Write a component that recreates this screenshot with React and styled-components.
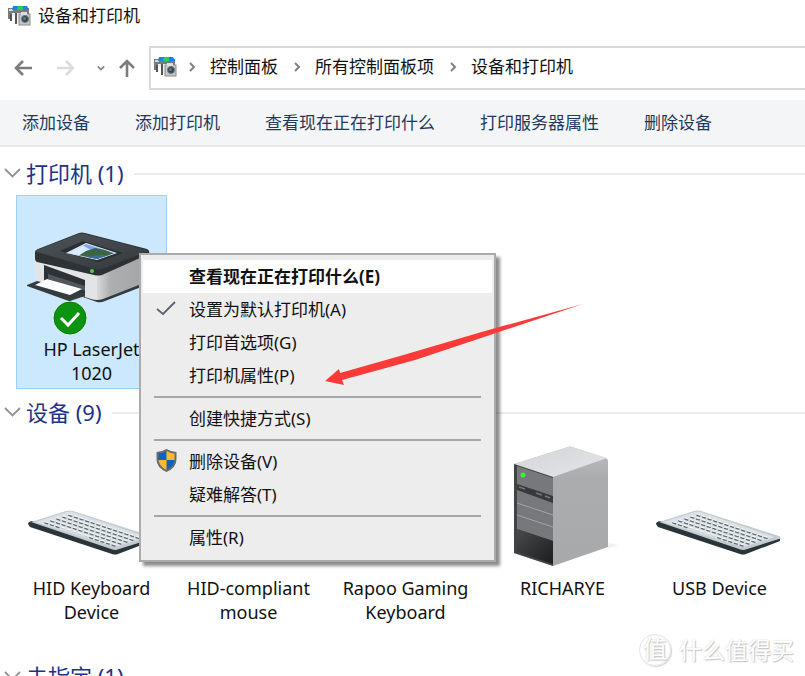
import React from "react";
import styled, { createGlobalStyle, css } from "styled-components";

const Global = createGlobalStyle`
  * { box-sizing: border-box; }
  body { margin: 0; background: #fff; }
  button { font: inherit; color: inherit; background: none; border: 0; padding: 0; cursor: default; white-space: nowrap; }
`;

const Window = styled.div`
  position: relative;
  height: 100vh;
  overflow: hidden;
  background: #fff;
  color: #111;
  font-family: "Noto Sans", "Noto Sans CJK SC", sans-serif;
  font-size: 17px;
  line-height: 24px;
`;
const TitleBar = styled.header`
  display: flex;
  align-items: center;
  gap: 7px;
  height: 34px;
  padding: 0 7px 2px;
`;
const Title = styled.h1`
  margin: 0;
  font-size: 17px;
  font-weight: 400;
`;
const NavRow = styled.nav`
  display: flex;
  align-items: center;
  margin-top: 12px;
  padding-left: 11px;
`;
const NavButton = styled.button`
  display: flex;
  flex-shrink: 0;
  justify-content: center;
  width: ${(p) => p.$width}px;
  color: ${(p) => (p.$faded ? "#dcdcdc" : "#7c7c7c")};
`;
const AddressBar = styled.div`
  flex: 1;
  display: flex;
  align-items: center;
  gap: 10px;
  height: 44px;
  padding: 0 2px 2px;
  border: 1px solid #d9d9d9;
  border-width: 2px 0 2px 2px;
`;
const Crumb = styled.button`
  padding: 0 4px 0 3px;
`;
const Toolbar = styled.div`
  display: flex;
  align-items: center;
  gap: 45px;
  height: 47px;
  margin-top: 10px;
  padding: 0 22px;
  background: #f4f5f7;
  border-bottom: 2px solid #e6e7ea;
  color: #1e395b;
`;
const GroupHeader = styled.h2`
  display: flex;
  align-items: center;
  gap: 5px;
  height: 32px;
  margin: 0;
  padding: 0 0 2px 4px;
  color: #1e3287;
  font-size: 22px;
  font-weight: 400;
  line-height: 30px;
  &::after {
    content: "";
    flex: 1;
    height: 2px;
    margin: 2px 0 0 5px;
    background: #ebebeb;
  }
`;
const Group = styled.section`
  padding-top: ${(p) => p.$top || 0}px;
`;
const TileGrid = styled.div`
  display: grid;
  grid-template-columns: repeat(auto-fill, 151px);
  gap: 6px;
  padding: 5px 0 ${(p) => p.$bottom}px 16px;
`;
const TileBox = styled.div`
  position: relative;
  display: flex;
  flex-direction: column;
  align-items: center;
  gap: 1px;
  height: 194px;
  padding: 12px 8px 0;
  border: 1px solid ${(p) => (p.$selected ? "#99d1ff" : "transparent")};
  background: ${(p) => (p.$selected ? "#cce8ff" : "transparent")};
  font-size: 18px;
  text-align: center;
`;
const Menu = styled.div`
  position: absolute;
  z-index: 2;
  left: 122px;
  top: 57px;
  width: 357px;
  padding: 5px 2px 6px;
  border: 2px solid #ababab;
  background: #ededed;
  box-shadow: 4px 4px 3px rgba(0, 0, 0, 0.45);
  font-size: 17px;
  text-align: left;
`;
const MenuItem = styled.button`
  display: flex;
  align-items: center;
  width: 100%;
  height: 33px;
  padding-top: 1px;
  ${(p) =>
    p.$active &&
    css`
      background: #fff;
      font-weight: 700;
    `}
`;
const MenuIcon = styled.span`
  display: flex;
  justify-content: center;
  width: 46px;
  padding-bottom: 3px;
`;
const Separator = styled.hr`
  height: 2px;
  margin: 4px 11px;
  border: 0;
  background: #a6a6a6;
`;
const Arrow = styled.svg`
  position: absolute;
  z-index: 3;
  left: 325px;
  top: 304px;
  pointer-events: none;
`;
const Watermark = styled.div`
  position: absolute;
  right: 11px;
  bottom: 9px;
  display: flex;
  align-items: center;
  gap: 8px;
  color: #fff;
  font-size: 23px;
  line-height: 34px;
  text-shadow: 1px 1px 1px #c4c4c4, 0 0 2px #ccc;
`;
const Seal = styled.span`
  width: 32px;
  height: 32px;
  border: 1px solid #e6e6e6;
  border-radius: 50%;
  box-shadow: 1px 1px 1px #d4d4d4;
  font-size: 24px;
  line-height: 28px;
  text-align: center;
`;

function DevicesIcon() {
  return (
    <svg width="24" height="22" viewBox="0 0 24 22" aria-hidden="true">
      <path d="M1 3h21v9H18V8H5v6H1z" fill="#777b7e" />
      <path d="M2 4h4v2H2z" fill="#d8dadb" />
      <path d="M6 1h14l2 4H5z" fill="#1685e8" />
      <path d="M11 1h5v4h-6z" fill="#23cf58" />
      <path d="M5 8h8v10H9V11H5z" fill="#eceeef" />
      <path d="M4 9v7M9 8v11" stroke="#555" strokeWidth="2" />
      <rect x="12" y="9" width="11" height="11" fill="#c4c6c8" stroke="#8c8e90" />
      <rect x="14" y="7" width="6" height="3" fill="#dcdedf" />
      <circle cx="18" cy="14" r="3.500" fill="#34474d" stroke="#777" />
      <circle cx="17.500" cy="13.500" r="1.500" fill="#4c8592" />
    </svg>
  );
}

function Chevron({ dir = "right" }) {
  const d = dir === "right" ? "M3 1l4 4-4 4" : "M1 3l4 4 4-4";
  return (
    <svg width="10" height="10" viewBox="0 0 10 10" fill="none" stroke="#808080" strokeWidth="2" aria-hidden="true">
      <path d={d} />
    </svg>
  );
}

function GroupChevron() {
  return (
    <svg width="17" height="12" viewBox="0 0 17 12" fill="none" stroke="#929292" strokeWidth="1.800" aria-hidden="true">
      <path d="M1 2l7.500 7.500L16 2" />
    </svg>
  );
}

function ArrowIcon({ d }) {
  return (
    <svg width="20" height="20" viewBox="0 0 20 20" fill="none" stroke="currentColor" strokeWidth="2.600" aria-hidden="true">
      <path d={d} />
    </svg>
  );
}

function PrinterArt() {
  return (
    <svg width="128" height="128" viewBox="0 0 128 128" overflow="visible" aria-hidden="true">
      <defs>
        <linearGradient id="lid" x1="0" y1="0" x2="1" y2="1">
          <stop offset="0" stopColor="#4d5356" />
          <stop offset="1" stopColor="#33393c" />
        </linearGradient>
        <linearGradient id="side" x1="0" x2="1">
          <stop offset="0" stopColor="#d9dadb" />
          <stop offset="0.250" stopColor="#aeafb0" />
          <stop offset="1" stopColor="#a2a3a4" />
        </linearGradient>
        <clipPath id="screen">
          <path d="M40 45l18-9 29 9-18 6z" />
        </clipPath>
      </defs>
      <path d="M7 72l62 22q4 1 8-1l44-17v-4L71 88z" fill="#333b3f" />
      <path d="M7 47l62 18v27q-3 0-6-1L10 74q-3-1-3-4z" fill="#e3e4e5" />
      <path d="M69 65l52-18v26L75 91q-3 1-6 1z" fill="url(#side)" />
      <path d="M16 57l41 15v17L16 73z" fill="#2c3235" />
      <path d="M20 66l37 12v5L20 71z" fill="#51585b" />
      <path d="M-1 77l10-4 48 12v3l-15 5q-2 0-4-1L-1 78z" fill="#353c3f" />
      <path d="M7 77l12-6 35 10-12 6z" fill="#fbfcfd" />
      <path d="M7 44q0-2 3-3l41-16q3-1 6 0l62 16q3 1 2 5L74 67q-4 1-8 0L9 54q-2-1-2-3z" fill="#2c3235" />
      <path d="M9 42l42-16q3-1 6 0l62 16q2 1-1 2L74 61q-4 1-7 0L9 44q-2-1 0-2z" fill="url(#lid)" />
      <path d="M32 43l23-10 40 12-25 9z" fill="#2a3032" />
      <path d="M38 45l20-10 31 10-20 7z" fill="#f4f7f8" />
      <g clipPath="url(#screen)">
        <path d="M38 34h52v20H38z" fill="#79a9f4" />
        <path d="M42 40l12-3 14 8-8 5-20-5z" fill="#d8ecff" />
        <path d="M50 48l8-5 9-3 10 2 12 5-18 6z" fill="#3c6546" />
        <path d="M58 49l14-2 12 0-15 6z" fill="#3c6b9c" />
      </g>
      <circle cx="64" cy="63" r="2" fill="#49d43d" />
      <circle cx="42" cy="110" r="17" fill="#e5f3e8" />
      <circle cx="42" cy="110" r="16" fill="#0c9310" stroke="#087b0b" />
      <path d="M33 110l7 7 11-12" fill="none" stroke="#fff" strokeWidth="3" />
    </svg>
  );
}

const KEY_ROWS = [0, 1, 2, 3, 4];
const KEY_COLS = Array.from({ length: 13 }, (_, i) => i);

function KeyboardArt() {
  return (
    <svg width="128" height="128" viewBox="0 0 128 128" overflow="visible" aria-hidden="true">
      <path d="M0 77q0-2 4-3l83 27 37-10v3l-34 13q-3 1-6 0L2 80z" fill="#2b3439" />
      <path d="M3 75l35-11q4-1 7 0l78 25q3 2 0 3L88 103q-3 0-5-1z" fill="#c3cbd1" />
      <path d="M7 75l32-10q3-1 6 0l74 25-32 10z" fill="#dbe1e5" />
      <g strokeLinecap="round">
        {KEY_ROWS.map((r) =>
          KEY_COLS.map((c) => {
            const space = r === 4 && c > 2 && c < 8;
            const x = 41 - r * 6 + c * 5.6;
            const y = 67 + r * 1.9 + c * 1.85;
            return (
              <g key={`${r}-${c}`}>
                <path d={`M${x} ${y + 1.2}l2.600 .9`} stroke={space ? "#c8d0d5" : "#5d6970"} strokeWidth="1.600" />
                <path d={`M${x} ${y}l2.600 .9`} stroke="#f5f7f8" strokeWidth="1.200" />
              </g>
            );
          })
        )}
      </g>
    </svg>
  );
}

function MouseArt() {
  return (
    <svg width="128" height="128" viewBox="0 0 128 128" aria-hidden="true">
      <ellipse cx="64" cy="80" rx="24" ry="32" fill="#3b4246" />
      <path d="M64 50v20" stroke="#aab0b3" strokeWidth="4" />
    </svg>
  );
}

function TowerArt() {
  return (
    <svg width="128" height="128" viewBox="0 0 128 128" overflow="visible" aria-hidden="true">
      <defs>
        <linearGradient id="towerTop" x1="0" y1="0" x2="1" y2="1">
          <stop offset="0" stopColor="#d2d4d7" />
          <stop offset="0.700" stopColor="#dfe0e3" />
          <stop offset="1" stopColor="#c6c7ca" />
        </linearGradient>
        <linearGradient id="towerSide" x1="0" y1="0" x2="0" y2="1">
          <stop offset="0" stopColor="#bfc0c2" />
          <stop offset="0.250" stopColor="#abacae" />
          <stop offset="1" stopColor="#a8a9ab" />
        </linearGradient>
        <linearGradient id="towerBase" x1="0" y1="0" x2="1" y2="1">
          <stop offset="0" stopColor="#494a4c" />
          <stop offset="1" stopColor="#1c1d1e" />
        </linearGradient>
      </defs>
      <path d="M109 96l10 2-10 4z" fill="#f1f1f1" />
      <path d="M15 17L69 0q2-1 4 0l34 11q2 1 2 3v86l-55 19-39-13z" fill="url(#towerSide)" />
      <path d="M15 17L69 0q2-1 4 0l35 11-54 19z" fill="url(#towerTop)" />
      <path d="M15 17l39 13v89l-39-13z" fill="#414345" />
      <path d="M18 19l36 12v63L18 82z" fill="#77787c" />
      <path d="M18 37l36 12v7L18 43z" fill="#37393b" />
      <path d="M20 40l6 2M37 46l6 2M46 49l5 2" stroke="#74777a" strokeWidth="1.500" />
      <path d="M18 56l36 12M18 68l36 12" stroke="#a0a1a5" />
      <path d="M18 82l36 12v23l-36-12z" fill="url(#towerBase)" />
      <circle cx="24" cy="28" r="2.500" fill="#3df03e" />
    </svg>
  );
}

function Shield() {
  return (
    <svg width="21" height="23" viewBox="0 0 21 23" aria-hidden="true">
      <clipPath id="shieldShape">
        <path d="M10.500 2q4 2.500 8 2.500V10q0 7-8 11-8-4-8-11V4.500q4 0 8-2.500z" />
      </clipPath>
      <path d="M10.500 0q5 3 10 3v7.500q0 8-10 12.500Q.5 18.500.5 10.500V3q5 0 10-3z" fill="#6a6c6e" />
      <g clipPath="url(#shieldShape)">
        <path d="M0 0h10.500v11H0zM10.500 11H21v12H10.500z" fill="#0b63bd" />
        <path d="M10.500 0H21v11H10.500zM0 11h10.500v12H0z" fill="#fdb92e" />
      </g>
    </svg>
  );
}

function Check() {
  return (
    <svg width="20" height="16" viewBox="0 0 20 16" fill="none" stroke="#59636d" strokeWidth="1.800" aria-hidden="true">
      <path d="M1 8l6 5L19 1" />
    </svg>
  );
}

const MENU = [
  { label: "查看现在正在打印什么(E)", active: true },
  { label: "设置为默认打印机(A)", icon: <Check /> },
  { label: "打印首选项(G)" },
  { label: "打印机属性(P)" },
  null,
  { label: "创建快捷方式(S)" },
  null,
  { label: "删除设备(V)", icon: <Shield /> },
  { label: "疑难解答(T)" },
  null,
  { label: "属性(R)" },
];

const DEVICES = [
  { name: "HID Keyboard Device", Art: KeyboardArt },
  { name: "HID-compliant mouse", Art: MouseArt },
  { name: "Rapoo Gaming Keyboard", Art: KeyboardArt },
  { name: "RICHARYE", Art: TowerArt },
  { name: "USB Device", Art: KeyboardArt },
];

const CRUMBS = ["控制面板", "所有控制面板项", "设备和打印机"];
const COMMANDS = ["添加设备", "添加打印机", "查看现在正在打印什么", "打印服务器属性", "删除设备"];

function ContextMenu() {
  return (
    <Menu role="menu">
      {MENU.map((item, i) =>
        item ? (
          <MenuItem key={i} role="menuitem" $active={item.active}>
            <MenuIcon>{item.icon}</MenuIcon>
            {item.label}
          </MenuItem>
        ) : (
          <Separator key={i} />
        )
      )}
    </Menu>
  );
}

export default function App() {
  return (
    <Window>
      <Global />
      <TitleBar>
        <DevicesIcon />
        <Title>设备和打印机</Title>
      </TitleBar>
      <NavRow>
        <NavButton $width={24} aria-label="后退"><ArrowIcon d="M19 10H3M10 3l-7 7 7 7" /></NavButton>
        <NavButton $width={62} $faded aria-label="前进"><ArrowIcon d="M1 10h16M10 3l7 7-7 7" /></NavButton>
        <NavButton $width={8} aria-label="最近"><Chevron dir="down" /></NavButton>
        <NavButton $width={44} aria-label="上移"><ArrowIcon d="M10 19V3M3 10l7-7 7 7" /></NavButton>
        <AddressBar>
          <DevicesIcon />
          {CRUMBS.map((c) => (
            <React.Fragment key={c}>
              <Chevron />
              <Crumb>{c}</Crumb>
            </React.Fragment>
          ))}
        </AddressBar>
      </NavRow>
      <Toolbar>
        {COMMANDS.map((c) => (
          <button key={c}>{c}</button>
        ))}
      </Toolbar>
      <Group $top={11}>
        <GroupHeader><GroupChevron />打印机 (1)</GroupHeader>
        <TileGrid $bottom={7}>
          <TileBox $selected>
            <PrinterArt />
            <span>HP LaserJet 1020</span>
            <ContextMenu />
          </TileBox>
        </TileGrid>
      </Group>
      <Group $top={1}>
        <GroupHeader><GroupChevron />设备 (9)</GroupHeader>
        <TileGrid $bottom={33}>
          {DEVICES.map(({ name, Art }) => (
            <TileBox key={name}>
              <Art />
              <span>{name}</span>
            </TileBox>
          ))}
        </TileGrid>
      </Group>
      <Group>
        <GroupHeader><GroupChevron />未指定 (1)</GroupHeader>
      </Group>
      <Arrow width="260" height="82" viewBox="0 0 260 82" aria-hidden="true">
        <path d="M0 77L14 65l1 4 60-17L160 27 258 0 165 31 90 56 17 76l2 5z" fill="#fc3a38" />
      </Arrow>
      <Watermark>
        <Seal>值</Seal>
        <span>什么值得买</span>
      </Watermark>
    </Window>
  );
}
